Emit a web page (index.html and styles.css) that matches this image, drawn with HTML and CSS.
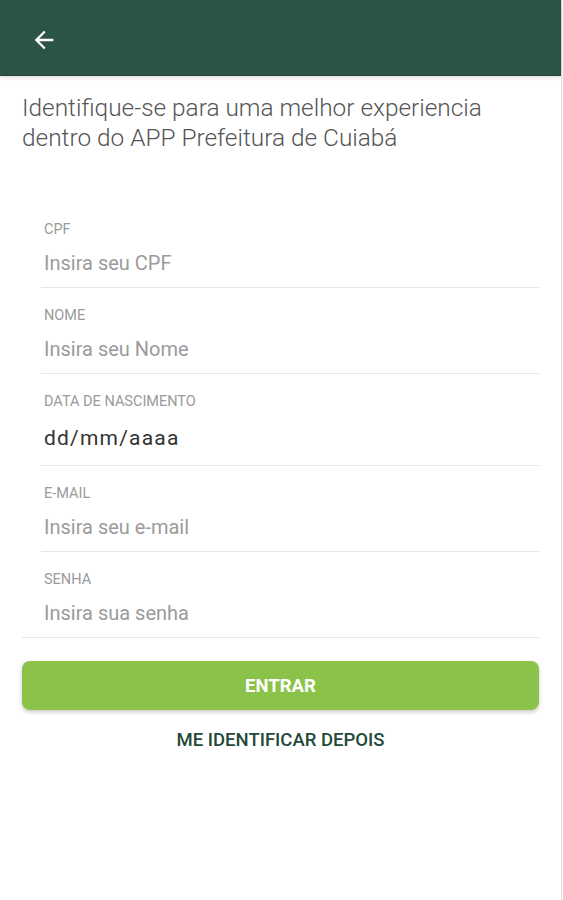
FILE: index.html
```html
<!DOCTYPE html>
<html lang="pt-BR">
<head>
<meta charset="utf-8">
<title>Identificação</title>
<link rel="stylesheet" href="styles.css">
</head>
<body>
<div class="app">
  <header class="topbar">
    <svg class="back" width="24" height="24" viewBox="0 0 24 24" aria-hidden="true">
      <path d="M20 11H7.83l5.59-5.59L12 4l-8 8 8 8 1.41-1.41L7.83 13H20v-2z" fill="#ffffff"/>
    </svg>
  </header>
  <main class="content">
    <p class="intro">Identifique-se para uma melhor experiencia dentro do APP Prefeitura de Cuiabá</p>
    <form class="form">
      <div class="field">
        <span class="label">CPF</span>
        <span class="value placeholder">Insira seu CPF</span>
      </div>
      <div class="field">
        <span class="label">NOME</span>
        <span class="value placeholder">Insira seu Nome</span>
      </div>
      <div class="field field-date">
        <span class="label">DATA DE NASCIMENTO</span>
        <span class="value date">dd/mm/aaaa</span>
      </div>
      <div class="field">
        <span class="label">E-MAIL</span>
        <span class="value placeholder">Insira seu e-mail</span>
      </div>
      <div class="field field-last">
        <span class="label">SENHA</span>
        <span class="value placeholder">Insira sua senha</span>
      </div>
      <div class="btn">ENTRAR</div>
      <div class="link">ME IDENTIFICAR DEPOIS</div>
    </form>
  </main>
</div>
</body>
</html>
```

FILE: styles.css
```css
* { box-sizing: border-box; }
html, body { margin: 0; padding: 0; background: #ffffff; }
body { font-family: Roboto, "Noto Sans", Arial, sans-serif; }

.app {
  width: 562px;
  min-height: 900px;
  border-right: 1px solid #dcdcdc;
  background: #ffffff;
}

.topbar {
  height: 76px;
  background: #2b5446;
  border-bottom: 1px solid #22473a;
  display: flex;
  align-items: center;
  padding-left: 30px;
  box-shadow: 0 2px 4px rgba(0,0,0,0.12);
  position: relative;
}
.back { width: 28px; height: 28px; margin-top: 4px; }

.content { padding: 0 22px 0 22px; }

.intro {
  margin: 17px 0 0 0;
  font-size: 24.4px;
  font-weight: 300;
  line-height: 30px;
  color: #555555;
  width: 505px;
}

.form {
  margin-top: 49px;
  display: flex;
  flex-direction: column;
}

.field {
  display: flex;
  flex-direction: column;
  margin-left: 19px;
  padding: 19px 0 12px 3px;
  border-bottom: 1px solid #e6e6e6;
  height: 86px;
}
.field-date { height: 92px; }
.field-last { margin-left: 0; padding-left: 22px; }

.label {
  font-size: 14.5px;
  line-height: 17px;
  color: #9a9a9a;
}
.value {
  margin-top: 13px;
  font-size: 20px;
  line-height: 24px;
}
.placeholder { color: #9b9b9b; }
.date {
  margin-top: 14px;
  font-size: 21px;
  line-height: 28px;
  color: #333333;
  letter-spacing: 1.2px;
}

.btn {
  margin-top: 23px;
  height: 49px;
  border-radius: 8px;
  background: #8bc34a;
  color: #ffffff;
  font-weight: 700;
  font-size: 18.5px;
  display: flex;
  align-items: center;
  justify-content: center;
  box-shadow: 0 2px 4px rgba(0,0,0,0.22);
}

.link {
  margin-top: 18px;
  text-align: center;
  font-size: 18.5px;
  font-weight: 500;
  color: #1f4a38;
  line-height: 24px;
}
```
